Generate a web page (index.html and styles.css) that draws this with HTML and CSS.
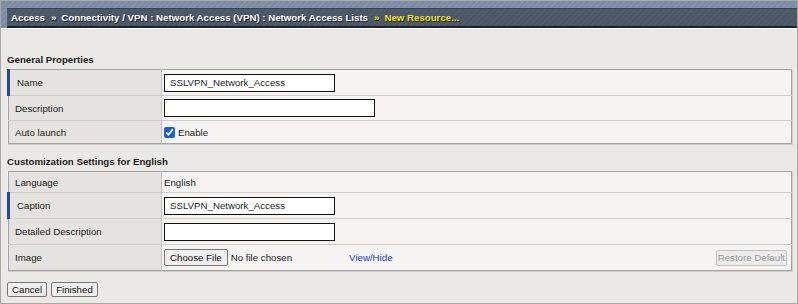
FILE: index.html
```html
<!DOCTYPE html>
<html lang="en">
<head>
    <meta charset="UTF-8">
    <title>New Resource</title>
    <link rel="stylesheet" href="styles.css">
</head>
<body>
    <div class="frame">
        <div class="topbar">
            <div class="crumbs">
                <span>Access</span>
                <span class="sep">&raquo;</span>
                <span>Connectivity / VPN : Network Access (VPN) : Network Access Lists</span>
                <span class="sep current">&raquo;</span>
                <span class="current">New Resource...</span>
            </div>
        </div>

        <div class="content">
            <h2 class="section-title first">General Properties</h2>
            <table class="props">
                <tr class="row-name">
                    <td class="label required">Name</td>
                    <td class="value"><input type="text" class="field" value="SSLVPN_Network_Access"></td>
                </tr>
                <tr class="row-desc">
                    <td class="label">Description</td>
                    <td class="value"><input type="text" class="field wide"></td>
                </tr>
                <tr class="row-launch">
                    <td class="label">Auto launch</td>
                    <td class="value">
                        <label class="check"><input type="checkbox" checked> Enable</label>
                    </td>
                </tr>
            </table>

            <h2 class="section-title">Customization Settings for English</h2>
            <table class="props">
                <tr class="row-lang">
                    <td class="label">Language</td>
                    <td class="value">English</td>
                </tr>
                <tr class="row-std">
                    <td class="label required">Caption</td>
                    <td class="value"><input type="text" class="field" value="SSLVPN_Network_Access"></td>
                </tr>
                <tr class="row-std">
                    <td class="label">Detailed Description</td>
                    <td class="value"><input type="text" class="field"></td>
                </tr>
                <tr class="row-std">
                    <td class="label">Image</td>
                    <td class="value">
                        <div class="image-cell">
                            <button type="button" class="btn">Choose File</button>
                            <span class="no-file">No file chosen</span>
                            <a href="#" class="toggle-link">View/Hide</a>
                            <button type="button" class="btn restore" disabled>Restore Default</button>
                        </div>
                    </td>
                </tr>
            </table>

            <div class="actions">
                <button type="button" class="btn">Cancel</button>
                <button type="button" class="btn">Finished</button>
            </div>
        </div>
    </div>
</body>
</html>
```

FILE: styles.css
```css
:root {
    --page-bg: #ebe9e5;
    --label-bg: #e4e3df;
    --value-bg: #f5f4f2;
    --row-line: #cfcecb;
    --required: #274a8c;
}

* {
    box-sizing: border-box;
}

body {
    margin: 0;
    font-family: 'Liberation Sans', Arial, sans-serif;
    font-size: 9.7px;
    color: #1c1c1c;
}

.frame {
    width: 798px;
    height: 304px;
    border: 1px solid #a8a8a8;
    background: var(--page-bg);
    overflow: hidden;
}

.topbar {
    height: 28px;
    padding: 7px 0 0 6px;
    background: repeating-linear-gradient(135deg, #8192aa 0 2px, #7a8ba3 2px 4px);
    border-bottom: 1px solid #ffffff;
}

.crumbs {
    height: 20px;
    padding: 0 0 0 4px;
    display: flex;
    align-items: center;
    gap: 4px;
    background: repeating-linear-gradient(135deg, #4f5b6b 0 2px, #4a5666 2px 4px);
    border-top: 1px solid #39424f;
    border-bottom: 2px solid #1d232c;
    color: #ffffff;
    font-weight: bold;
    text-shadow: 1px 1px 0 #1a1f27;
}

.crumbs .sep {
    margin: 0 1px 0 2px;
}

.crumbs .current {
    color: #f4e41c;
}

.content {
    padding: 0 5px 0 6px;
}

.section-title {
    margin: 11px 0 3px;
    font-size: 9.7px;
    font-weight: bold;
    line-height: 13px;
}

.section-title.first {
    margin-top: 24px;
}

.props {
    width: 100%;
    border-collapse: collapse;
    border: 1px solid #a3a3a3;
    box-shadow: 1px 1px 0 #cfcfcf;
    background: var(--value-bg);
}

.props td {
    padding: 0;
    border-top: 1px solid var(--row-line);
    vertical-align: middle;
}

.props tr:first-child td {
    border-top: none;
}

.props .label {
    width: 153px;
    padding-left: 6px;
    background: var(--label-bg);
    border-right: 1px solid #c4c3c0;
}

.props .label.required {
    padding-left: 7px;
    border-left: 3px solid var(--required);
}

.props .value {
    padding-left: 2px;
}

.row-name td { height: 26px; }
.row-desc td { height: 25px; }
.row-launch td { height: 23px; }
.row-lang td { height: 21px; }
.row-std td { height: 26px; }

.field {
    display: block;
    width: 171px;
    height: 18px;
    padding: 0 5px;
    border: 1px solid #111111;
    font-family: inherit;
    font-size: 9.7px;
    background: #ffffff;
    color: #1c1c1c;
}

.field.wide {
    width: 211px;
}

.check {
    display: flex;
    align-items: center;
    gap: 3px;
}

.check input {
    width: 11px;
    height: 11px;
    margin: 0;
    accent-color: #1c5fd4;
}

.image-cell {
    display: flex;
    align-items: center;
    padding-right: 4px;
}

.btn {
    height: 17px;
    padding: 0 5px;
    border: 1px solid #767676;
    border-radius: 2px;
    background: #efefef;
    font-family: inherit;
    font-size: 9.7px;
    color: #111111;
}

.no-file {
    margin-left: 3px;
}

.toggle-link {
    margin-left: 57px;
    color: #2638c4;
    text-decoration: none;
}

.btn.restore {
    margin-left: auto;
    height: 16px;
    padding: 0 1px;
    border-color: #c2c2c2;
    background: #ececec;
    color: #9a9a9a;
}

.actions {
    display: flex;
    gap: 4px;
    margin-top: 11px;
}

.actions .btn {
    height: 15px;
    padding: 0 4px;
}
```
